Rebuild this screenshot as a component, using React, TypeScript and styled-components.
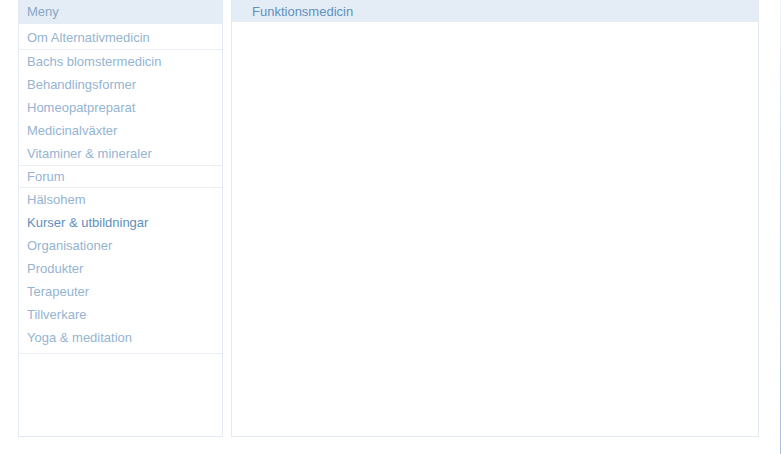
import React from "react";
import styled, { createGlobalStyle } from "styled-components";

const Global = createGlobalStyle`
  html, body { margin: 0; padding: 0; background: #ffffff; }
  body { font-family: "Liberation Sans", Arial, Helvetica, sans-serif; }
`;

const Page = styled.div`
  display: flex;
  align-items: stretch;
  width: 781px;
  height: 454px;
  box-sizing: border-box;
  padding-left: 18px;
`;

const Columns = styled.div`
  display: flex;
  gap: 8px;
  height: 437px;
  align-items: stretch;
`;

const Panel = styled.div<{ $w: number }>`
  width: ${(p) => p.$w}px;
  box-sizing: border-box;
  border: 1px solid #e3eaf1;
  border-top: none;
  background: #ffffff;
  display: flex;
  flex-direction: column;
`;

const Header = styled.div<{ $h: number; $pad: number; $color: string; $shift?: number }>`
  height: ${(p) => p.$h}px;
  box-sizing: border-box;
  padding-top: ${(p) => p.$shift ?? 0}px;
  line-height: ${(p) => p.$h - (p.$shift ?? 0)}px;
  background: #e4edf5;
  padding-left: ${(p) => p.$pad}px;
  font-size: 13px;
  color: ${(p) => p.$color};
  flex-shrink: 0;
`;

const Group = styled.ul<{ $pt?: number; $pb?: number }>`
  list-style: none;
  margin: 0;
  padding: ${(p) => p.$pt ?? 0}px 0 ${(p) => p.$pb ?? 0}px 0;
  border-bottom: 1px solid #e9eff5;
`;

const Item = styled.li<{ $active?: boolean; $h?: number }>`
  height: ${(p) => p.$h ?? 23}px;
  line-height: ${(p) => p.$h ?? 23}px;
  padding-left: 8px;
  font-size: 13px;
  color: ${(p) => (p.$active ? "#6090bd" : "#95b4d2")};
  white-space: nowrap;
`;

const EdgeLine = styled.div`
  width: 1px;
  height: 454px;
  margin-left: auto;
  background: linear-gradient(to bottom, #f1f5f9 0%, #c9d9e9 40%, #a6c2de 100%);
`;

const groups: { items: string[]; pt?: number; pb?: number; h?: number }[] = [
  { items: ["Om Alternativmedicin"], pt: 3, h: 22 },
  {
    items: [
      "Bachs blomstermedicin",
      "Behandlingsformer",
      "Homeopatpreparat",
      "Medicinalväxter",
      "Vitaminer & mineraler",
    ],
  },
  { items: ["Forum"], h: 21 },
  {
    items: [
      "Hälsohem",
      "Kurser & utbildningar",
      "Organisationer",
      "Produkter",
      "Terapeuter",
      "Tillverkare",
      "Yoga & meditation",
    ],
    pb: 4,
  },
];

export default function App() {
  return (
    <>
      <Global />
      <Page>
        <Columns>
          <Panel $w={205}>
            <Header $h={24} $pad={8} $color="#88a8c8">
              Meny
            </Header>
            {groups.map((g, i) => (
              <Group key={i} $pt={g.pt} $pb={g.pb}>
                {g.items.map((t) => (
                  <Item key={t} $h={g.h} $active={t === "Kurser & utbildningar"}>
                    {t}
                  </Item>
                ))}
              </Group>
            ))}
          </Panel>
          <Panel $w={528}>
            <Header $h={22} $pad={20} $color="#6190be" $shift={1}>
              Funktionsmedicin
            </Header>
          </Panel>
        </Columns>
        <EdgeLine />
      </Page>
    </>
  );
}
